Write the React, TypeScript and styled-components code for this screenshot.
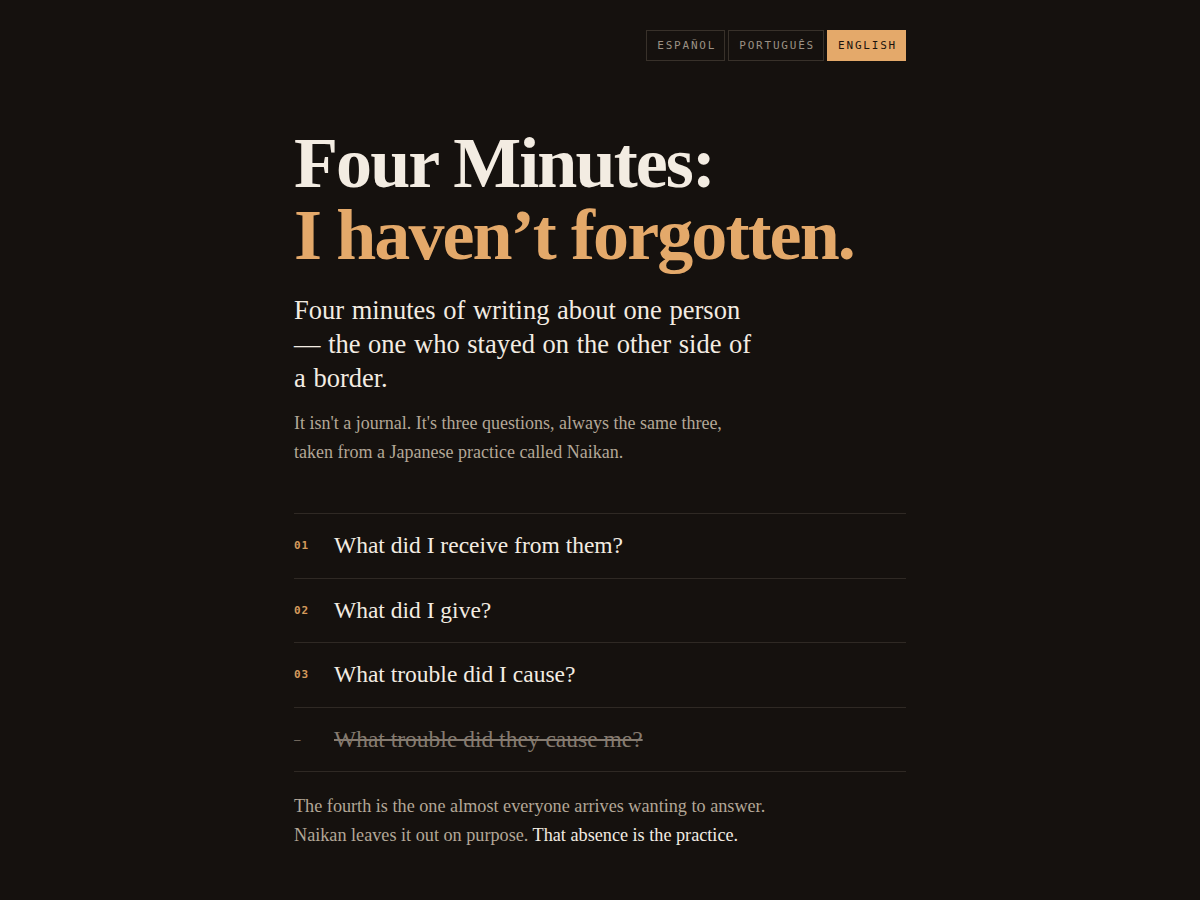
import React from "react";
import styled, { createGlobalStyle } from "styled-components";

const GlobalStyle = createGlobalStyle`
  html, body {
    margin: 0;
    padding: 0;
    background: #15110e;
  }
  body {
    font-family: "Liberation Serif", "DejaVu Serif", serif;
    color: #f3ece2;
  }
`;

const Page = styled.main`
  width: 612px;
  margin: 0 auto;
  padding: 30px 0 60px;
`;

const LangBar = styled.nav`
  display: flex;
  justify-content: flex-end;
  gap: 3px;
`;

const LangButton = styled.button<{ $active?: boolean }>`
  height: 31px;
  padding: 0 8px 0 10px;
  border: 1px solid ${(p) => (p.$active ? "#e4a96a" : "#38312a")};
  background: ${(p) => (p.$active ? "#e4a96a" : "transparent")};
  color: ${(p) => (p.$active ? "#1a130d" : "#9c9184")};
  font-family: "DejaVu Sans Mono", "Liberation Mono", monospace;
  font-size: 11px;
  letter-spacing: 1.8px;
  cursor: pointer;
`;

const Title = styled.h1`
  margin: 66px 0 0;
  font-family: "Liberation Serif", serif;
  font-weight: 700;
  font-size: 72px;
  line-height: 72px;
  letter-spacing: -1.9px;
  color: #f3ece2;
`;

const Accent = styled.span`
  display: block;
  color: #e4a96a;
`;

const Lede = styled.p`
  margin: 22px 0 0;
  max-width: 464px;
  font-size: 26.5px;
  line-height: 34px;
  word-spacing: 1px;
  color: #f3ece2;
`;

const Body = styled.p`
  margin: 14px 0 0;
  max-width: 440px;
  font-size: 18px;
  line-height: 29px;
  color: #b3a797;
`;

const QuestionList = styled.ol`
  list-style: none;
  margin: 46px 0 0;
  padding: 0;
  border-top: 1px solid #2f2924;
`;

const Question = styled.li`
  box-sizing: border-box;
  display: flex;
  align-items: center;
  height: 64.5px;
  border-bottom: 1px solid #2f2924;
`;

const Num = styled.span`
  width: 40px;
  flex-shrink: 0;
  font-family: "DejaVu Sans Mono", "Liberation Mono", monospace;
  font-size: 11px;
  font-weight: 700;
  letter-spacing: 1px;
  color: #d49a5c;
`;

const QText = styled.span<{ $struck?: boolean }>`
  font-size: 23.5px;
  color: ${(p) => (p.$struck ? "#857b70" : "#f3ece2")};
  text-decoration: ${(p) => (p.$struck ? "line-through" : "none")};
  text-decoration-thickness: 1.5px;
`;

const Dash = styled(Num)`
  color: #857b70;
  font-weight: 400;
`;

const Footer = styled.p`
  margin: 20px 0 0;
  font-size: 18.2px;
  line-height: 29px;
  color: #b3a797;
`;

const Strong = styled.span`
  color: #f3ece2;
`;

const questions = [
  { n: "01", q: "What did I receive from them?" },
  { n: "02", q: "What did I give?" },
  { n: "03", q: "What trouble did I cause?" },
];

export default function App() {
  return (
    <>
      <GlobalStyle />
      <Page>
        <LangBar>
          <LangButton>ESPAÑOL</LangButton>
          <LangButton>PORTUGUÊS</LangButton>
          <LangButton $active>ENGLISH</LangButton>
        </LangBar>

        <Title>
          Four Minutes:
          <Accent>I haven’t forgotten.</Accent>
        </Title>

        <Lede>
          Four minutes of writing about one person — the one who stayed on the
          other side of a border.
        </Lede>

        <Body>
          It isn't a journal. It's three questions, always the same three,
          taken from a Japanese practice called Naikan.
        </Body>

        <QuestionList>
          {questions.map((item) => (
            <Question key={item.n}>
              <Num>{item.n}</Num>
              <QText>{item.q}</QText>
            </Question>
          ))}
          <Question>
            <Dash>–</Dash>
            <QText $struck>What trouble did they cause me?</QText>
          </Question>
        </QuestionList>

        <Footer>
          The fourth is the one almost everyone arrives wanting to answer.
          <br />
          Naikan leaves it out on purpose.{" "}
          <Strong>That absence is the practice.</Strong>
        </Footer>
      </Page>
    </>
  );
}
